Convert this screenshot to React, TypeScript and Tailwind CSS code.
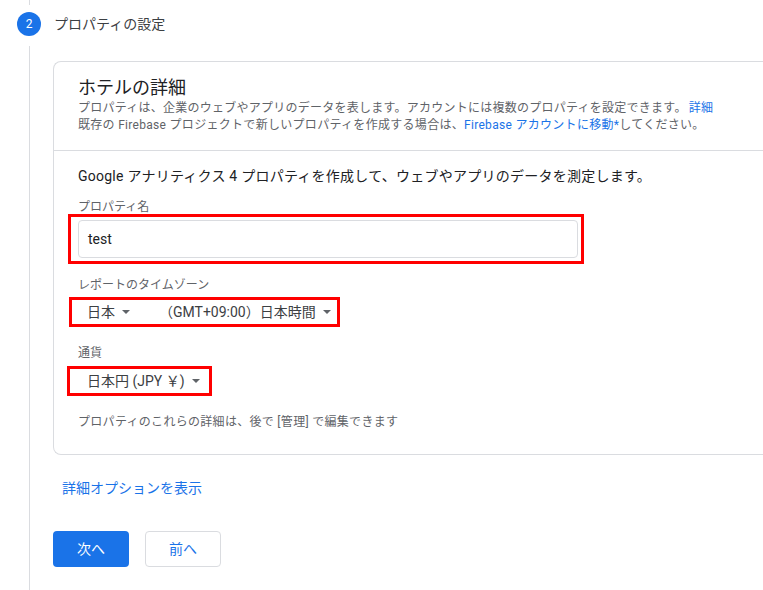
import React from 'react';

const Caret = () => (
  <svg width="8" height="4" viewBox="0 0 8 4" className="ml-[7px] shrink-0">
    <path d="M0 0 L8 0 L4 4 Z" fill="#5f6368" />
  </svg>
);

export default function App() {
  return (
    <div className="relative w-[763px] h-[590px] overflow-hidden bg-white font-['Roboto','Noto_Sans_CJK_JP',sans-serif] text-[#202124]">
      <div className="flex h-full">
        {/* step rail */}
        <div className="w-[53px] shrink-0 flex flex-col">
          <div className="ml-[29px] w-px h-[5px] bg-[#dadce0]" />
          <div className="ml-[17px] mt-[7px] w-6 h-6 rounded-full bg-[#1a73e8] text-white text-[12px] flex items-center justify-center">
            2
          </div>
          <div className="ml-[29px] mt-[10px] w-px flex-1 bg-[#dadce0]" />
        </div>

        {/* content */}
        <div className="flex-1 min-w-0">
          <div className="h-[24px] mt-[12px] flex items-center text-[14px] text-[#3c4043] ml-px">
            プロパティの設定
          </div>

          <div className="mt-[25px] w-[730px] border border-r-0 border-[#dadce0] rounded-l-lg">
            <div className="pl-[24px] pt-[14px] pb-[16px] border-b border-[#dadce0]">
              <div className="text-[18px] leading-[24px]">ホテルの詳細</div>
              <div className="text-[12px] leading-[17px] text-[#5f6368] whitespace-nowrap tracking-[0.25px]">
                プロパティは、企業のウェブやアプリのデータを表します。アカウントには複数のプロパティを設定できます。
                <span className="text-[#1a73e8] ml-[2px]">詳細</span>
              </div>
              <div className="text-[12px] leading-[17px] text-[#5f6368] whitespace-nowrap tracking-[0.3px]">
                既存の Firebase プロジェクトで新しいプロパティを作成する場合は、
                <span className="text-[#1a73e8]">Firebase アカウントに移動*</span>
                してください。
              </div>
            </div>

            <div className="pl-[24px] pt-[15px] pb-[24px]">
              <p className="text-[14px] leading-[20px] tracking-[0.25px]">
                Google アナリティクス 4 プロパティを作成して、ウェブやアプリのデータを測定します。
              </p>

              <div className="mt-[13px] text-[12px] leading-[16px] text-[#5f6368]">プロパティ名</div>
              <div className="mt-[-1px] ml-[-10px] w-[516px] border-[3px] border-[#ff0000] pt-[3px] pl-[7px] pr-[3px] pb-[3px]">
                <div className="h-[38px] w-full border border-[#dadce0] rounded flex items-center px-[9px] text-[14px]">
                  test
                </div>
              </div>

              <div className="mt-[13px] text-[12px] leading-[16px] text-[#5f6368]">レポートのタイムゾーン</div>
              <div className="mt-[4px] ml-[-9px] w-[271px] h-[30px] border-[3px] border-[#ff0000] flex items-center pl-[15px] text-[14px] text-[#3c4043]">
                <span>日本</span>
                <Caret />
                <span className="ml-[29px]">（GMT+09:00）日本時間</span>
                <Caret />
              </div>

              <div className="mt-[18px] text-[12px] leading-[16px] text-[#5f6368]">通貨</div>
              <div className="mt-[5px] ml-[-11px] w-[145px] h-[30px] border-[3px] border-[#ff0000] flex items-center pl-[17px] text-[14px] text-[#3c4043]">
                <span>日本円 (JPY ￥)</span>
                <Caret />
              </div>

              <div className="mt-[18px] text-[12px] leading-[16px] text-[#5f6368] tracking-[0.3px]">
                プロパティのこれらの詳細は、後で [管理] で編集できます
              </div>
            </div>
          </div>

          <div className="mt-[23px] ml-[9px] text-[14px] leading-[20px] text-[#1a73e8]">詳細オプションを表示</div>

          <div className="mt-[33px] flex gap-[16px]">
            <button className="w-[76px] h-[36px] rounded bg-[#1a73e8] text-white text-[14px]">次へ</button>
            <button className="w-[76px] h-[36px] rounded border border-[#dadce0] bg-white text-[#1a73e8] text-[14px]">前へ</button>
          </div>
        </div>
      </div>
    </div>
  );
}
